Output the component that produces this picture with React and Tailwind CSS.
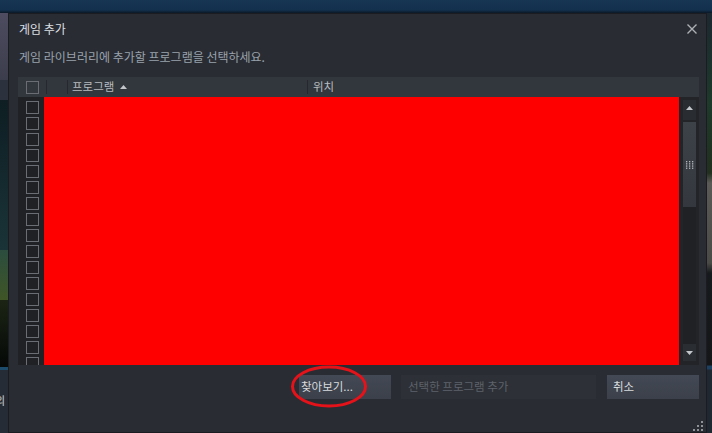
import React from "react";

function Box() {
  return <div className="w-[13px] h-[13px] border border-[#6a6d73]" />;
}

function TriUp({ color = "#c3c6ca" }) {
  return (
    <svg width="7" height="4" viewBox="0 0 7 4">
      <polygon points="3.5,0 7,4 0,4" fill={color} />
    </svg>
  );
}

function TriDown({ color = "#c3c6ca" }) {
  return (
    <svg width="7" height="4" viewBox="0 0 7 4">
      <polygon points="0,0 7,0 3.5,4" fill={color} />
    </svg>
  );
}

function Grip() {
  const dots = [];
  for (let r = 0; r < 4; r++) {
    for (let c = 0; c < 3; c++) {
      dots.push(<rect key={r + "-" + c} x={c * 3} y={r * 2.2} width="1.3" height="1.3" fill="#b4b8bd" />);
    }
  }
  return (
    <svg width="8" height="8" viewBox="0 0 8 8">
      {dots}
    </svg>
  );
}

export default function App() {
  const rows = Array.from({ length: 17 });
  return (
    <div className="relative w-[712px] h-[433px] flex flex-col overflow-hidden bg-[#1e2630] font-['Noto_Sans_CJK_KR','Noto_Sans',sans-serif]">
      <div className="h-[13px] shrink-0 bg-[linear-gradient(to_bottom,#173654,#13314d_10px,#0b1826)]" />
      <div className="flex flex-1 min-h-0">
        {/* left background strip */}
        <div className="w-[8px] shrink-0 flex flex-col overflow-hidden">
          <div className="h-[67px] bg-[linear-gradient(to_bottom,#4d4c60,#3c3d4c)]" />
          <div className="h-[20px] bg-[#2b313d]" />
          <div className="h-[150px] bg-[linear-gradient(to_bottom,#0e1e23,#1a3337)]" />
          <div className="h-[50px] bg-[linear-gradient(to_bottom,#2c4d3f,#3f5526)]" />
          <div className="h-[67px] bg-[linear-gradient(to_bottom,#1b2414,#050807)]" />
          <div className="h-[3px] bg-[#1c4b6c]" />
          <div className="flex-1 bg-[#252c35] pt-[24px]">
            <div className="-ml-[5px] text-[11px] leading-[12px] text-[#c9ccd0]">의</div>
          </div>
        </div>

        {/* dialog */}
        <div className="relative flex-1 flex flex-col bg-[#292c33] border border-[#1a1c21] pl-[9px] pr-[7px]">
          <div className="h-[29px] shrink-0 flex items-center justify-between pl-[1px] pr-[2px]">
            <span className="text-[12px] text-[#dcdfe2]">게임 추가</span>
            <svg width="10" height="10" viewBox="0 0 10 10">
              <path d="M0.5 0.5 L9.5 9.5 M9.5 0.5 L0.5 9.5" stroke="#adb1b5" strokeWidth="1.4" />
            </svg>
          </div>
          <div className="h-[28px] shrink-0 flex items-center pl-[1px]">
            <span className="text-[12px] text-[#99a2ac]">게임 라이브러리에 추가할 프로그램을 선택하세요.</span>
          </div>

          {/* table header */}
          <div className="mt-[6px] h-[20px] shrink-0 flex items-center bg-[#32363d] text-[11.5px] text-[#b7bbbf]">
            <div className="w-[28px] pl-[8px] flex items-center">
              <Box />
            </div>
            <div className="w-[1px] h-[14px] bg-[#25282d]" />
            <div className="w-[20px]" />
            <div className="w-[1px] h-[14px] bg-[#25282d]" />
            <div className="w-[239px] pl-[4px] flex items-center">
              <span>프로그램</span>
              <span className="ml-[6px] flex items-center">
                <TriUp />
              </span>
            </div>
            <div className="w-[1px] h-[14px] bg-[#25282d]" />
            <div className="pl-[5px]">위치</div>
          </div>

          {/* list */}
          <div className="h-[268px] shrink-0 flex">
            <div className="w-[26px] bg-[#1f2125] overflow-hidden">
              {rows.map((_, i) => (
                <div key={i} className="h-[16px] pt-[4px] pl-[8px]">
                  <Box />
                </div>
              ))}
            </div>
            <div className="flex-1 bg-[#ff0000]" />
            <div className="w-[20px] bg-[#222428] pl-[4px] pr-[3px] pt-[3px] pb-[4px] flex flex-col">
              <div className="h-[20px] bg-[#292c31] flex justify-center pt-[6px]">
                <TriUp />
              </div>
              <div className="mt-[2px] h-[85px] bg-[linear-gradient(to_bottom,#3d4148,#34373e)] flex items-center justify-center">
                <Grip />
              </div>
              <div className="flex-1 bg-[#1f2125]" />
              <div className="h-[17px] bg-[#2a2d32] flex items-center justify-center">
                <TriDown />
              </div>
            </div>
          </div>

          {/* buttons */}
          <div className="mt-[10px] h-[24px] shrink-0 flex justify-end text-[11.5px]">
            <div className="w-[92px] h-[24px] flex items-center pl-[2px] bg-[linear-gradient(to_bottom,#434955,#3b404a)] text-[#d8dbde]">
              찾아보기...
            </div>
            <div className="ml-[10px] w-[195px] h-[24px] flex items-center pl-[7px] bg-[#2d3036] text-[#5d626a]">
              선택한 프로그램 추가
            </div>
            <div className="ml-[11px] w-[92px] h-[24px] flex items-center pl-[6px] bg-[linear-gradient(to_bottom,#434955,#3b404a)] text-[#d8dbde]">
              취소
            </div>
          </div>

          {/* resize grip */}
          <svg className="absolute right-[3px] bottom-[1px]" width="10" height="10" viewBox="0 0 10 10">
            <rect x="8" y="0" width="2" height="2" fill="#8e9297" />
            <rect x="4" y="4" width="2" height="2" fill="#8e9297" />
            <rect x="8" y="4" width="2" height="2" fill="#8e9297" />
            <rect x="0" y="8" width="2" height="2" fill="#8e9297" />
            <rect x="4" y="8" width="2" height="2" fill="#8e9297" />
            <rect x="8" y="8" width="2" height="2" fill="#8e9297" />
          </svg>
        </div>

        {/* right background strip */}
        <div className="w-[5px] shrink-0 bg-[linear-gradient(to_bottom,#1c2830,#1d3a2a_90px,#22301f_160px,#5b5a56_170px,#4a4a46_250px,#171a1c_260px,#141618_352px,#1c4060_353px,#1c4060_356px,#1f2731_357px)]" />
      </div>

      {/* red annotation ellipse */}
      <svg className="absolute left-[290px] top-[364px]" width="80" height="45" viewBox="0 0 80 45">
        <ellipse cx="39" cy="22.5" rx="36.5" ry="19.5" fill="none" stroke="#e5121a" strokeWidth="3" />
      </svg>
    </div>
  );
}
